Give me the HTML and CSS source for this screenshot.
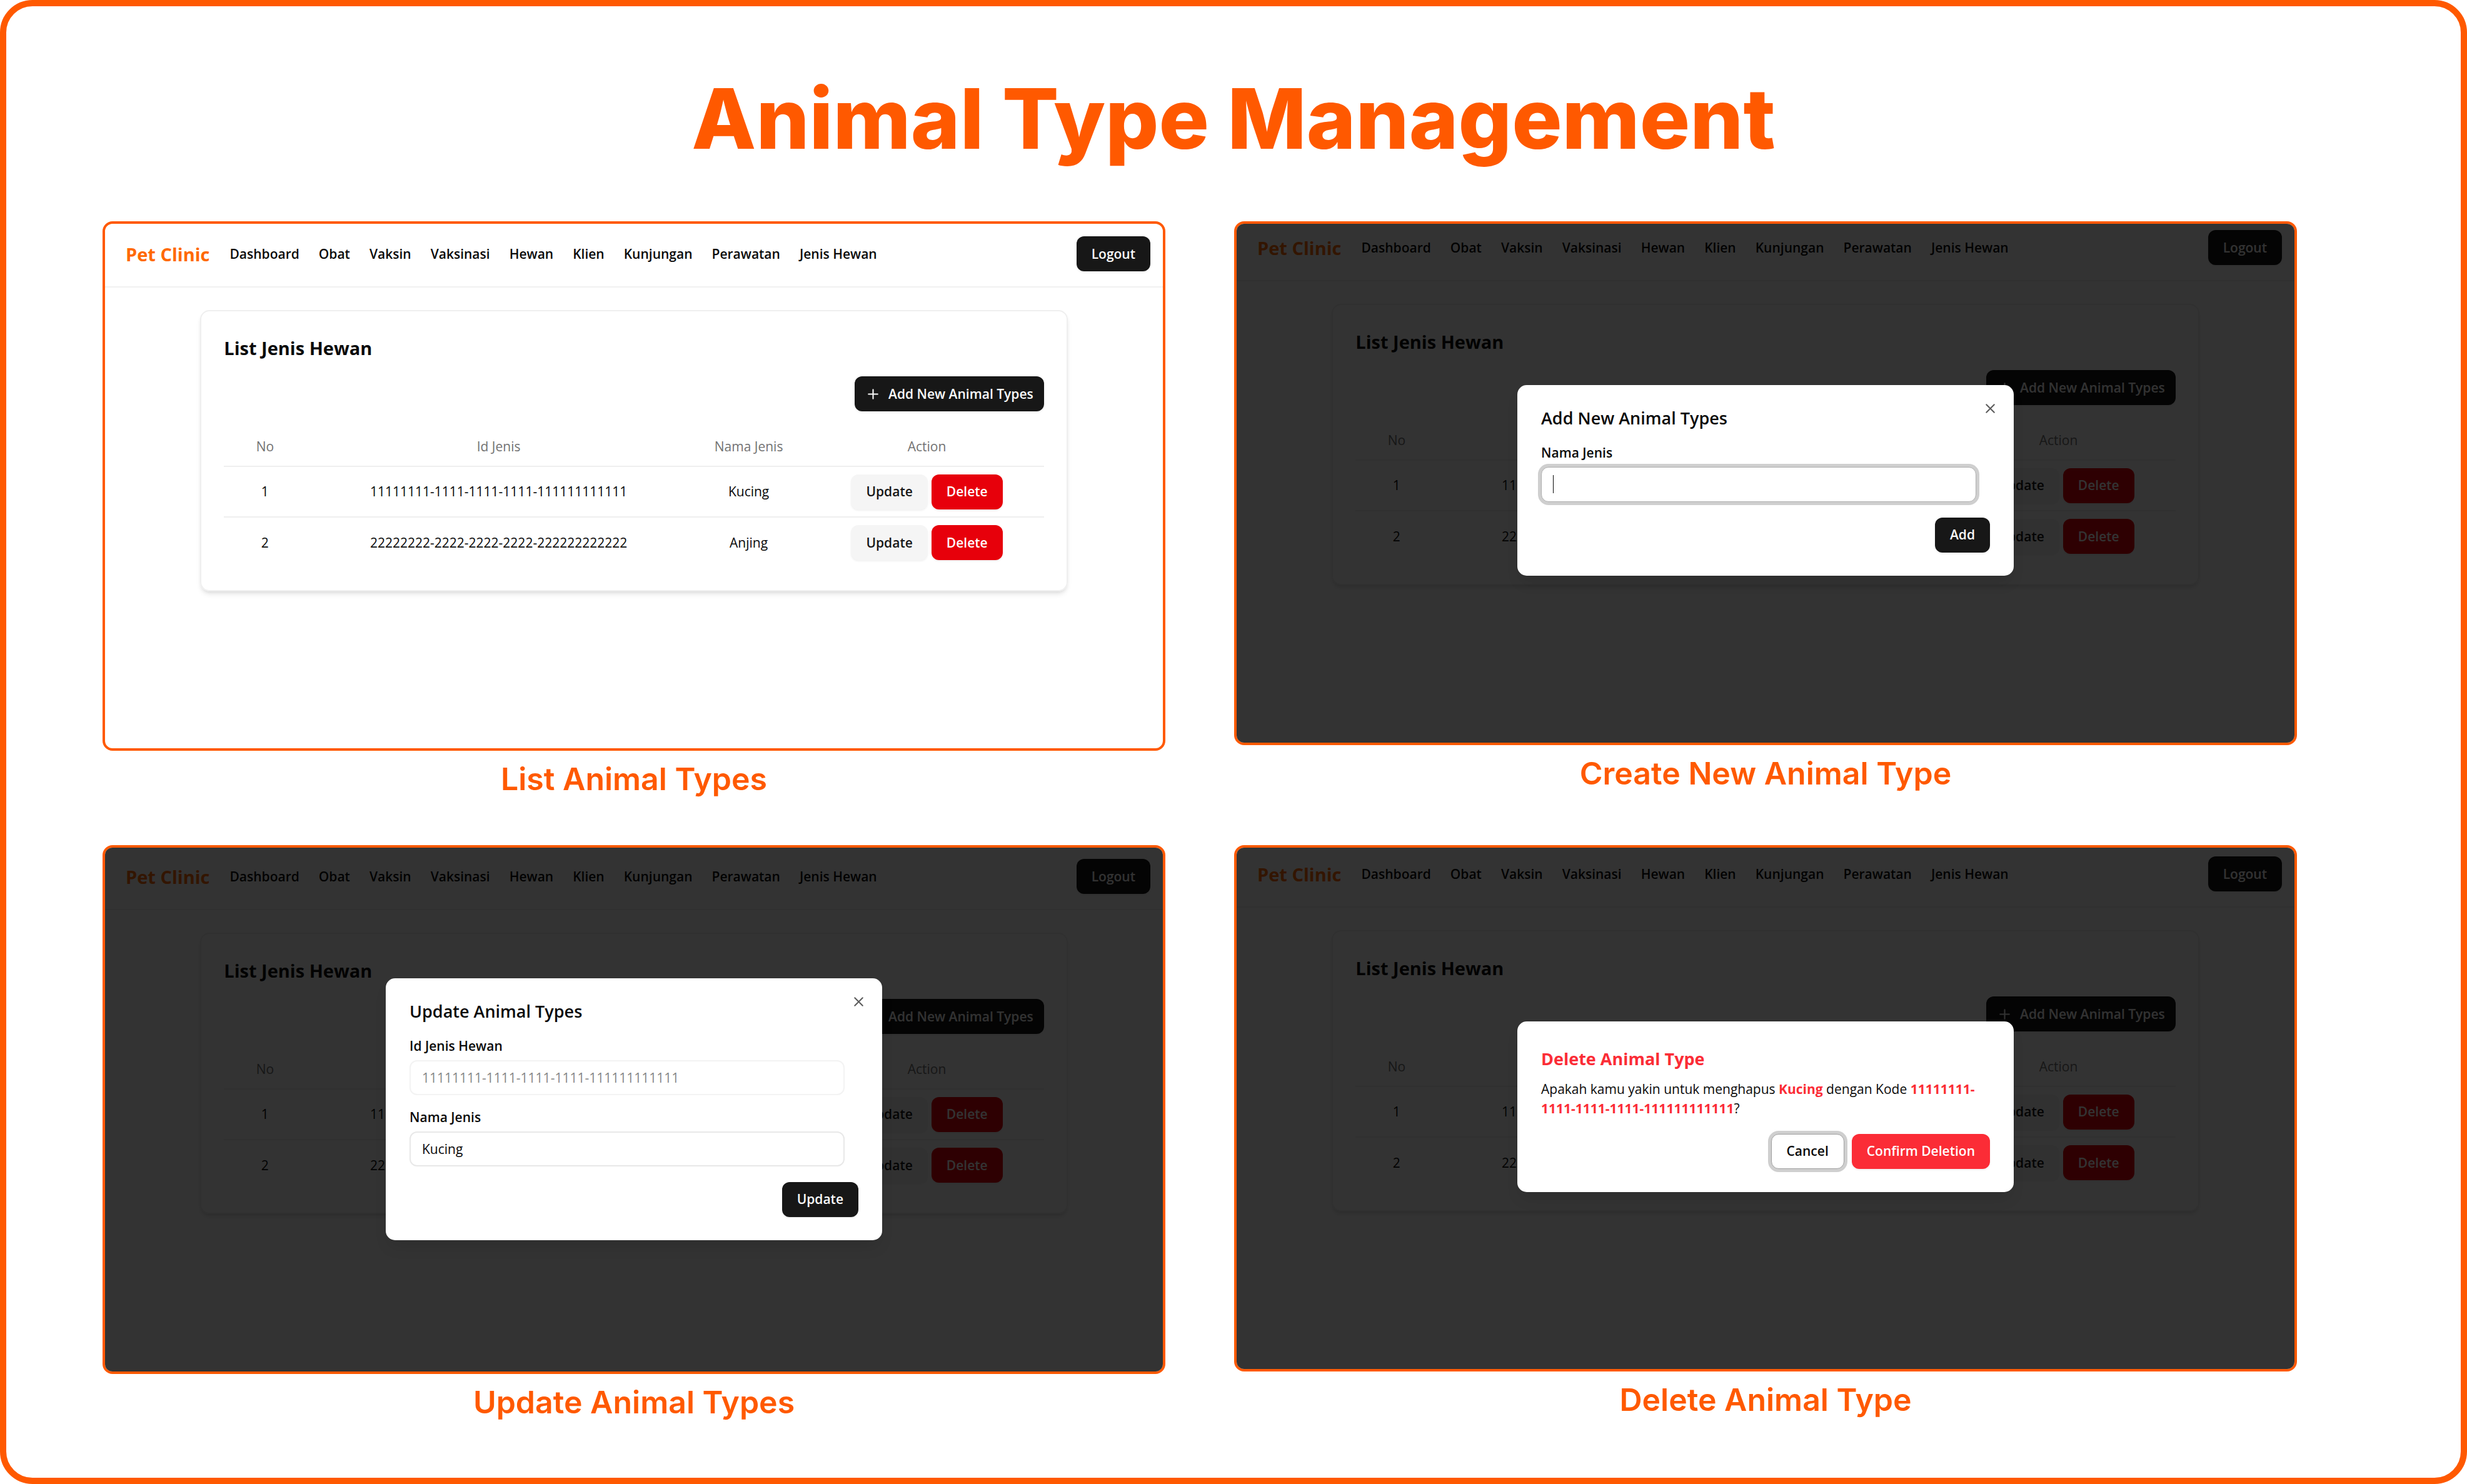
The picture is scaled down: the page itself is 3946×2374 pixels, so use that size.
FILE: index.html
```html
<!DOCTYPE html>
<html lang="id">
<head>
<meta charset="utf-8">
<title>Animal Type Management</title>
<link rel="stylesheet" href="styles.css">
</head>
<body>
<main class="board">
  <h1 class="board-title">Animal Type Management</h1>
  <div class="gallery">

    <figure class="shot">
      <section class="screen screen-list">
        <header class="topbar">
          <a class="brand" href="#">Pet Clinic</a>
          <nav class="menu">
            <a href="#">Dashboard</a><a href="#">Obat</a><a href="#">Vaksin</a><a href="#">Vaksinasi</a><a href="#">Hewan</a><a href="#">Klien</a><a href="#">Kunjungan</a><a href="#">Perawatan</a><a href="#">Jenis Hewan</a>
          </nav>
          <button class="btn btn-dark" type="button">Logout</button>
        </header>
        <div class="card">
          <h2 class="card-title">List Jenis Hewan</h2>
          <div class="toolbar">
            <button class="btn btn-dark btn-add" type="button"><svg class="icon-plus" viewBox="0 0 24 24" aria-hidden="true"><path d="M5 12h14M12 5v14"/></svg>Add New Animal Types</button>
          </div>
          <table class="types">
            <colgroup><col class="col-no"><col class="col-id"><col class="col-name"><col class="col-action"></colgroup>
            <thead><tr><th>No</th><th>Id Jenis</th><th>Nama Jenis</th><th>Action</th></tr></thead>
            <tbody>
              <tr><td>1</td><td>11111111-1111-1111-1111-111111111111</td><td>Kucing</td><td><div class="actions"><button class="btn btn-light" type="button">Update</button><button class="btn btn-red" type="button">Delete</button></div></td></tr>
              <tr><td>2</td><td>22222222-2222-2222-2222-222222222222</td><td>Anjing</td><td><div class="actions"><button class="btn btn-light" type="button">Update</button><button class="btn btn-red" type="button">Delete</button></div></td></tr>
            </tbody>
          </table>
        </div>
      </section>
      <figcaption>List Animal Types</figcaption>
    </figure>

    <figure class="shot">
      <section class="screen screen-create">
        <header class="topbar">
          <a class="brand" href="#">Pet Clinic</a>
          <nav class="menu">
            <a href="#">Dashboard</a><a href="#">Obat</a><a href="#">Vaksin</a><a href="#">Vaksinasi</a><a href="#">Hewan</a><a href="#">Klien</a><a href="#">Kunjungan</a><a href="#">Perawatan</a><a href="#">Jenis Hewan</a>
          </nav>
          <button class="btn btn-dark" type="button">Logout</button>
        </header>
        <div class="card">
          <h2 class="card-title">List Jenis Hewan</h2>
          <div class="toolbar">
            <button class="btn btn-dark btn-add" type="button"><svg class="icon-plus" viewBox="0 0 24 24" aria-hidden="true"><path d="M5 12h14M12 5v14"/></svg>Add New Animal Types</button>
          </div>
          <table class="types">
            <colgroup><col class="col-no"><col class="col-id"><col class="col-name"><col class="col-action"></colgroup>
            <thead><tr><th>No</th><th>Id Jenis</th><th>Nama Jenis</th><th>Action</th></tr></thead>
            <tbody>
              <tr><td>1</td><td>11111111-1111-1111-1111-111111111111</td><td>Kucing</td><td><div class="actions"><button class="btn btn-light" type="button">Update</button><button class="btn btn-red" type="button">Delete</button></div></td></tr>
              <tr><td>2</td><td>22222222-2222-2222-2222-222222222222</td><td>Anjing</td><td><div class="actions"><button class="btn btn-light" type="button">Update</button><button class="btn btn-red" type="button">Delete</button></div></td></tr>
            </tbody>
          </table>
        </div>
        <div class="overlay">
          <form class="dialog" role="dialog" aria-labelledby="create-title">
            <button class="close" type="button" aria-label="Close"><svg viewBox="0 0 24 24" aria-hidden="true"><path d="M18 6 6 18M6 6l12 12"/></svg></button>
            <h3 class="dialog-title" id="create-title">Add New Animal Types</h3>
            <div class="field">
              <label for="create-name">Nama Jenis</label>
              <div class="control"><input class="focused" id="create-name" type="text"><span class="caret"></span></div>
            </div>
            <div class="dialog-actions"><button class="btn btn-dark" type="button">Add</button></div>
          </form>
        </div>
      </section>
      <figcaption>Create New Animal Type</figcaption>
    </figure>

    <figure class="shot">
      <section class="screen screen-update">
        <header class="topbar">
          <a class="brand" href="#">Pet Clinic</a>
          <nav class="menu">
            <a href="#">Dashboard</a><a href="#">Obat</a><a href="#">Vaksin</a><a href="#">Vaksinasi</a><a href="#">Hewan</a><a href="#">Klien</a><a href="#">Kunjungan</a><a href="#">Perawatan</a><a href="#">Jenis Hewan</a>
          </nav>
          <button class="btn btn-dark" type="button">Logout</button>
        </header>
        <div class="card">
          <h2 class="card-title">List Jenis Hewan</h2>
          <div class="toolbar">
            <button class="btn btn-dark btn-add" type="button"><svg class="icon-plus" viewBox="0 0 24 24" aria-hidden="true"><path d="M5 12h14M12 5v14"/></svg>Add New Animal Types</button>
          </div>
          <table class="types">
            <colgroup><col class="col-no"><col class="col-id"><col class="col-name"><col class="col-action"></colgroup>
            <thead><tr><th>No</th><th>Id Jenis</th><th>Nama Jenis</th><th>Action</th></tr></thead>
            <tbody>
              <tr><td>1</td><td>11111111-1111-1111-1111-111111111111</td><td>Kucing</td><td><div class="actions"><button class="btn btn-light" type="button">Update</button><button class="btn btn-red" type="button">Delete</button></div></td></tr>
              <tr><td>2</td><td>22222222-2222-2222-2222-222222222222</td><td>Anjing</td><td><div class="actions"><button class="btn btn-light" type="button">Update</button><button class="btn btn-red" type="button">Delete</button></div></td></tr>
            </tbody>
          </table>
        </div>
        <div class="overlay">
          <form class="dialog" role="dialog" aria-labelledby="update-title">
            <button class="close" type="button" aria-label="Close"><svg viewBox="0 0 24 24" aria-hidden="true"><path d="M18 6 6 18M6 6l12 12"/></svg></button>
            <h3 class="dialog-title" id="update-title">Update Animal Types</h3>
            <div class="field">
              <label for="update-id">Id Jenis Hewan</label>
              <div class="control"><input id="update-id" type="text" value="11111111-1111-1111-1111-111111111111" disabled></div>
            </div>
            <div class="field">
              <label for="update-name">Nama Jenis</label>
              <div class="control"><input id="update-name" type="text" value="Kucing"></div>
            </div>
            <div class="dialog-actions"><button class="btn btn-dark" type="button">Update</button></div>
          </form>
        </div>
      </section>
      <figcaption>Update Animal Types</figcaption>
    </figure>

    <figure class="shot">
      <section class="screen screen-delete">
        <header class="topbar">
          <a class="brand" href="#">Pet Clinic</a>
          <nav class="menu">
            <a href="#">Dashboard</a><a href="#">Obat</a><a href="#">Vaksin</a><a href="#">Vaksinasi</a><a href="#">Hewan</a><a href="#">Klien</a><a href="#">Kunjungan</a><a href="#">Perawatan</a><a href="#">Jenis Hewan</a>
          </nav>
          <button class="btn btn-dark" type="button">Logout</button>
        </header>
        <div class="card">
          <h2 class="card-title">List Jenis Hewan</h2>
          <div class="toolbar">
            <button class="btn btn-dark btn-add" type="button"><svg class="icon-plus" viewBox="0 0 24 24" aria-hidden="true"><path d="M5 12h14M12 5v14"/></svg>Add New Animal Types</button>
          </div>
          <table class="types">
            <colgroup><col class="col-no"><col class="col-id"><col class="col-name"><col class="col-action"></colgroup>
            <thead><tr><th>No</th><th>Id Jenis</th><th>Nama Jenis</th><th>Action</th></tr></thead>
            <tbody>
              <tr><td>1</td><td>11111111-1111-1111-1111-111111111111</td><td>Kucing</td><td><div class="actions"><button class="btn btn-light" type="button">Update</button><button class="btn btn-red" type="button">Delete</button></div></td></tr>
              <tr><td>2</td><td>22222222-2222-2222-2222-222222222222</td><td>Anjing</td><td><div class="actions"><button class="btn btn-light" type="button">Update</button><button class="btn btn-red" type="button">Delete</button></div></td></tr>
            </tbody>
          </table>
        </div>
        <div class="overlay">
          <div class="dialog" role="alertdialog" aria-labelledby="delete-title">
            <h3 class="dialog-title danger-title" id="delete-title">Delete Animal Type</h3>
            <p class="message">Apakah kamu yakin untuk menghapus <strong>Kucing</strong> dengan Kode <strong>11111111-1111-1111-1111-111111111111</strong>?</p>
            <div class="dialog-actions"><button class="btn btn-outline" type="button">Cancel</button><button class="btn btn-confirm" type="button">Confirm Deletion</button></div>
          </div>
        </div>
      </section>
      <figcaption>Delete Animal Type</figcaption>
    </figure>

  </div>
</main>
</body>
</html>
```

FILE: styles.css
```css
* { box-sizing: border-box; }

body {
  margin: 0;
  background: #fff;
  color: #0a0a0a;
  font-family: "Open Sans", "Noto Sans", sans-serif;
  font-size: 21px;
  line-height: 31px;
}

h1, h2, h3, p, figure { margin: 0; }
a { color: inherit; text-decoration: none; }
button, input { font: inherit; color: inherit; }

.board {
  min-height: 100vh;
  padding: 99px 262px 80px 154px;
  border: 10px solid #ff5900;
  border-radius: 52px;
}

.board-title {
  margin: 0 -262px 85px -154px;
  color: #ff5900;
  font-family: Inter, sans-serif;
  font-size: 134px;
  font-weight: 800;
  line-height: 160px;
  text-align: center;
}

.gallery {
  display: grid;
  grid-template-columns: 1fr 1fr;
  gap: 76px 110px;
  align-items: start;
}

figcaption {
  margin-top: 15px;
  color: #ff5900;
  font-family: Inter, sans-serif;
  font-size: 50px;
  font-weight: 600;
  line-height: 60px;
  text-align: center;
}

/* Framed application screens */
.screen {
  position: relative;
  overflow: hidden;
  border: 4px solid #ff5900;
  border-radius: 16px;
}
.screen-list { aspect-ratio: 1700 / 847; }
.screen-create { aspect-ratio: 1700 / 838; }
.screen-update { aspect-ratio: 1700 / 846; }
.screen-delete { aspect-ratio: 1700 / 842; }

.topbar {
  display: flex;
  align-items: center;
  padding: 20px 20px 24px 33px;
  border-bottom: 2px solid #f1f1f1;
}
.screen-create .topbar { padding-top: 10px; }
.screen-update .topbar { padding-top: 18px; }
.screen-delete .topbar { padding-top: 14px; }

.brand {
  margin-right: 32px;
  color: #ff6900;
  font-size: 29px;
  font-weight: 700;
}
.menu {
  display: flex;
  flex: 1;
  gap: 31px;
  font-weight: 600;
}

.btn {
  height: 56px;
  padding: 0 24px;
  border: 0;
  border-radius: 12px;
  box-shadow: 0 2px 3px rgba(0, 0, 0, .06);
  font-weight: 600;
  line-height: 31px;
}
.btn-dark { background: #171717; color: #fafafa; }
.btn-light { background: #f5f5f5; color: #171717; }
.btn-red { background: #e7000b; color: #fff; }
.btn-confirm { background: #fb2c36; color: #fff; }
.btn-outline {
  border: 1px solid #a1a1a1;
  background: #fff;
  box-shadow: 0 0 0 5px #cfcfcf;
}
.btn-add {
  display: flex;
  align-items: center;
  gap: 12px;
  padding: 0 17px;
}
.icon-plus {
  width: 25px;
  fill: none;
  stroke: currentColor;
  stroke-width: 2;
  stroke-linecap: round;
}

.card {
  width: 82%;
  margin: 36px auto 0;
  padding: 38px 36px 36px;
  border: 2px solid #efefef;
  border-radius: 15px;
  box-shadow: 0 6px 9px -2px rgba(0, 0, 0, .1), 0 3px 6px -3px rgba(0, 0, 0, .1);
}
.card-title {
  font-size: 29px;
  font-weight: 700;
  line-height: 42px;
}
.toolbar {
  display: flex;
  justify-content: flex-end;
  margin: 24px 0 26px;
}

.types {
  width: 100%;
  border-collapse: collapse;
  table-layout: fixed;
  text-align: center;
}
.col-no { width: 10%; }
.col-id { width: 47%; }
.col-name { width: 14%; }
.col-action { width: 29%; }
.types tr { border-bottom: 2px solid #efefef; }
.types tbody tr:last-child { border-bottom: 0; }
.types th {
  height: 62px;
  padding: 0;
  color: #737373;
  font-weight: 500;
}
.types td { height: 81px; padding: 0; }
.types th:last-child, .types td:last-child { padding-left: 6px; }
.actions { display: flex; justify-content: center; gap: 6px; }

/* Modal layer */
.overlay {
  position: absolute;
  inset: 0;
  display: flex;
  align-items: center;
  justify-content: center;
  background: rgba(0, 0, 0, .8);
}
.screen-create .overlay { padding-bottom: 10px; }
.screen-update .overlay { padding-bottom: 2px; }
.screen-delete .overlay { padding-bottom: 6px; }
.dialog {
  position: relative;
  width: 794px;
  padding: 38px 38px 37px;
  border-radius: 15px;
  background: #fff;
  box-shadow: 0 15px 23px -5px rgba(0, 0, 0, .1);
}
.dialog-title {
  margin-bottom: 25px;
  font-size: 27px;
  font-weight: 600;
  line-height: 30px;
}
.danger-title {
  margin-bottom: 12px;
  color: #fb2c36;
  font-weight: 700;
  line-height: 43px;
}
.message strong { color: #fb2c36; }

.field { margin-bottom: 20px; }
.field label {
  display: block;
  margin-bottom: 7px;
  font-weight: 600;
}
.control { position: relative; width: 696px; }
.control input {
  display: block;
  width: 100%;
  height: 56px;
  padding: 0 18px;
  border: 2px solid #e8e8e8;
  border-radius: 12px;
  background: #fff;
}
.control input:disabled { opacity: .5; }
.control .focused {
  border: 1px solid #b0b0b0;
  box-shadow: 0 0 0 5px #cfcfcf;
}
.caret {
  position: absolute;
  top: 13px;
  left: 19px;
  width: 1px;
  height: 29px;
  background: #0a0a0a;
}
.dialog-actions {
  display: flex;
  justify-content: flex-end;
  gap: 12px;
  margin-top: 25px;
}
.close {
  position: absolute;
  top: 25px;
  right: 25px;
  width: 25px;
  height: 25px;
  padding: 0;
  border: 0;
  background: none;
  color: #5c5c5c;
}
.close svg {
  display: block;
  fill: none;
  stroke: currentColor;
  stroke-width: 2;
  stroke-linecap: round;
}
```
